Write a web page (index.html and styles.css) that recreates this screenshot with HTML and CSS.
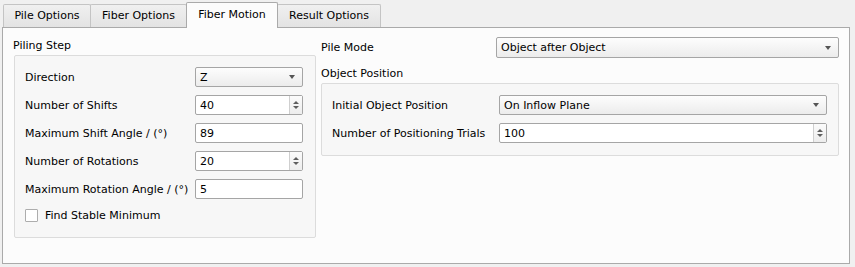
FILE: index.html
```html
<!DOCTYPE html>
<html lang="en">

<head>
    <meta charset="UTF-8">
    <meta name="viewport" content="width=device-width, initial-scale=1.0">
    <title>Fiber Motion</title>
    <link rel="stylesheet" href="styles.css">
</head>

<body>
    <div class="tabs">
        <div class="tab tab-pile">Pile Options</div>
        <div class="tab tab-fiber">Fiber Options</div>
        <div class="tab tab-motion active">Fiber Motion</div>
        <div class="tab tab-result">Result Options</div>
    </div>

    <div class="panel">
        <div class="col-left">
            <div class="group-title">Piling Step</div>
            <div class="group group-left">
                <div class="row">
                    <span class="label">Direction</span>
                    <div class="combo"><span>Z</span><span class="arrow"></span></div>
                </div>
                <div class="row">
                    <span class="label">Number of Shifts</span>
                    <div class="spin"><span class="value">40</span><span class="spin-buttons"><span class="up"></span><span class="down"></span></span></div>
                </div>
                <div class="row">
                    <span class="label">Maximum Shift Angle / (°)</span>
                    <div class="line-edit">89</div>
                </div>
                <div class="row">
                    <span class="label">Number of Rotations</span>
                    <div class="spin"><span class="value">20</span><span class="spin-buttons"><span class="up"></span><span class="down"></span></span></div>
                </div>
                <div class="row">
                    <span class="label">Maximum Rotation Angle / (°)</span>
                    <div class="line-edit">5</div>
                </div>
                <div class="row check-row">
                    <span class="checkbox"></span>
                    <span>Find Stable Minimum</span>
                </div>
            </div>
        </div>

        <div class="col-right">
            <div class="row">
                <span class="label label-mode">Pile Mode</span>
                <div class="combo combo-mode"><span>Object after Object</span><span class="arrow"></span></div>
            </div>
            <div class="group-title title-position">Object Position</div>
            <div class="group group-right">
                <div class="row">
                    <span class="label label-position">Initial Object Position</span>
                    <div class="combo combo-position"><span>On Inflow Plane</span><span class="arrow"></span></div>
                </div>
                <div class="row">
                    <span class="label label-position">Number of Positioning Trials</span>
                    <div class="spin combo-position"><span class="value">100</span><span class="spin-buttons"><span class="up"></span><span class="down"></span></span></div>
                </div>
            </div>
        </div>
    </div>
</body>

</html>
```

FILE: styles.css
```css
body {
    margin: 0;
    background-color: #f0f0f0;
    font-family: "DejaVu Sans", sans-serif;
    font-size: 11px;
    color: #000;
}

/* tab bar */
.tabs {
    display: flex;
    align-items: flex-end;
    height: 27px;
    padding-left: 3px;
}

.tab {
    box-sizing: border-box;
    height: 23px;
    margin-right: -1px;
    padding-bottom: 1px;
    border: 1px solid #c4c4c4;
    border-bottom: none;
    border-radius: 2px 2px 0 0;
    background: linear-gradient(#f0f0f0, #e3e3e3);
    display: flex;
    align-items: center;
    justify-content: center;
}

.tab-pile {
    width: 88px;
}

.tab-fiber {
    width: 97px;
}

.tab-motion {
    width: 92px;
}

.tab-result {
    width: 104px;
}

.tab.active {
    position: relative;
    z-index: 1;
    height: 26px;
    margin-bottom: -1px;
    padding-bottom: 2px;
    border-color: #aaaaaa;
    background: #fcfcfc;
}

/* page */
.panel {
    box-sizing: border-box;
    width: 848px;
    height: 237px;
    margin-left: 2px;
    padding: 9px 10px 0 10px;
    border: 1px solid #aaaaaa;
    background-color: #fcfcfc;
    display: flex;
    gap: 5px;
}

.col-left {
    width: 303px;
}

.col-right {
    width: 518px;
    display: flex;
    flex-direction: column;
}

.group-title {
    height: 18px;
    line-height: 18px;
}

.title-position {
    height: 19px;
    line-height: 19px;
    margin-top: 6px;
}

.group {
    box-sizing: border-box;
    border: 1px solid #dcdcdc;
    border-radius: 2px;
    background-color: #f7f7f7;
    display: flex;
    flex-direction: column;
    gap: 8px;
}

.group-left {
    width: 302px;
    margin-left: 1px;
    padding: 11px 12px 13px 10px;
}

.group-right {
    width: 518px;
    padding: 11px 11px 12px 10px;
}

.row {
    display: flex;
    align-items: center;
    height: 20px;
}

.col-right > .row {
    height: 21px;
}

.label {
    width: 170px;
    flex-shrink: 0;
}

.label-mode {
    width: 175px;
}

.label-position {
    width: 167px;
}

/* controls */
.combo,
.spin,
.line-edit {
    box-sizing: border-box;
    width: 108px;
    height: 20px;
    border: 1px solid #a5a5a5;
    border-radius: 2px;
    display: flex;
    align-items: center;
}

.combo {
    justify-content: space-between;
    padding-left: 4px;
    background: linear-gradient(#fdfdfd, #ececec);
}

.combo-mode {
    width: 343px;
    height: 21px;
}

.combo-position {
    width: 328px;
}

.arrow {
    width: 0;
    height: 0;
    margin-right: 7px;
    border-left: 3.5px solid transparent;
    border-right: 3.5px solid transparent;
    border-top: 4px solid #555;
}

.line-edit {
    padding-left: 4px;
    background-color: #fff;
}

.spin {
    justify-content: space-between;
    padding-left: 4px;
    background-color: #fff;
}

.spin-buttons {
    box-sizing: border-box;
    width: 13px;
    height: 100%;
    border-left: 1px solid #cfcfcf;
    background: linear-gradient(#fbfbfb, #ededed);
    display: flex;
    flex-direction: column;
    align-items: center;
    justify-content: center;
    gap: 2px;
}

.up {
    width: 0;
    height: 0;
    border-left: 3.5px solid transparent;
    border-right: 3.5px solid transparent;
    border-bottom: 3px solid #5e5e5e;
}

.down {
    width: 0;
    height: 0;
    border-left: 3.5px solid transparent;
    border-right: 3.5px solid transparent;
    border-top: 3px solid #5e5e5e;
}

.check-row {
    height: 17px;
    gap: 7px;
}

.checkbox {
    box-sizing: border-box;
    width: 13px;
    height: 13px;
    border: 1px solid #adadad;
    border-radius: 1px;
    background-color: #fff;
}
```
